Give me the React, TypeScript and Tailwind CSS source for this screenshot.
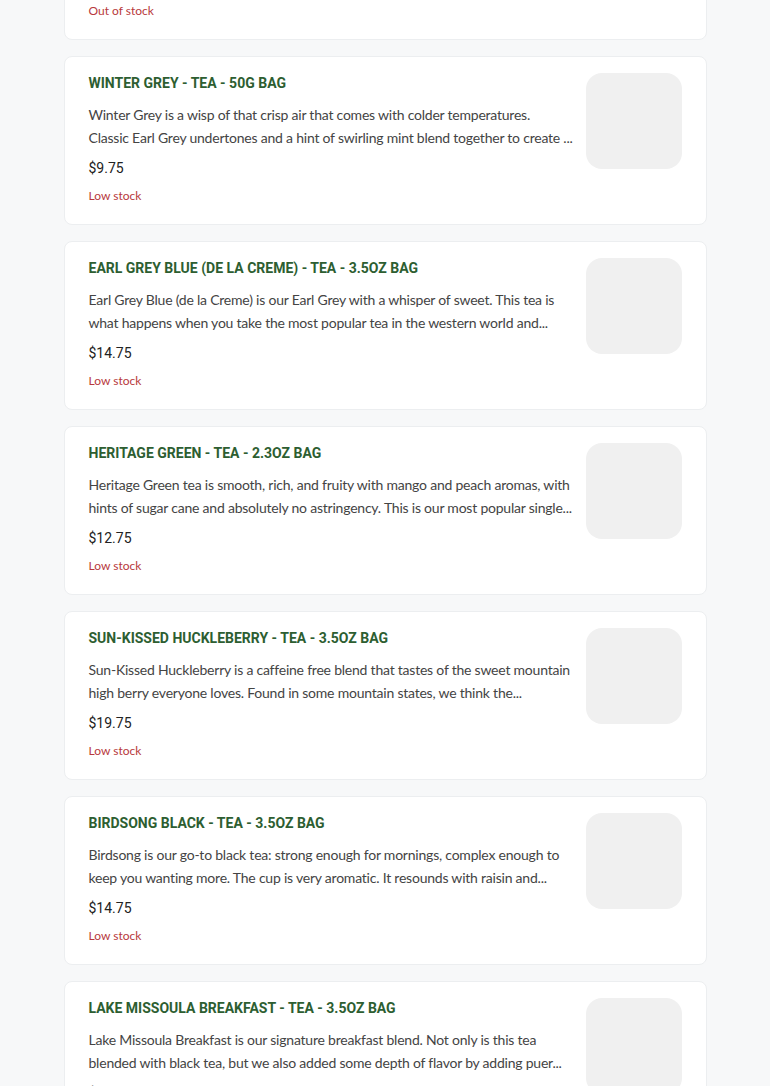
import React from 'react';

type Product = {
  name: string;
  lines: [string, string];
  price: string;
  stock: string;
};

const products: Product[] = [
  {
    name: 'Kashmiri Chai - Tea - 3.5oz Bag',
    lines: [
      'Kashmiri Chai is a warming blend of black tea and spices, rich with cardamom,',
      'cinnamon and clove for a cozy cup any time of day...',
    ],
    price: '$14.75',
    stock: 'Out of stock',
  },
  {
    name: 'Winter Grey - Tea - 50g Bag',
    lines: [
      'Winter Grey is a wisp of that crisp air that comes with colder temperatures.',
      'Classic Earl Grey undertones and a hint of swirling mint blend together to create ...',
    ],
    price: '$9.75',
    stock: 'Low stock',
  },
  {
    name: 'Earl Grey Blue (de la Creme) - Tea - 3.5oz Bag',
    lines: [
      'Earl Grey Blue (de la Creme) is our Earl Grey with a whisper of sweet. This tea is',
      'what happens when you take the most popular tea in the western world and...',
    ],
    price: '$14.75',
    stock: 'Low stock',
  },
  {
    name: 'Heritage Green - Tea - 2.3oz Bag',
    lines: [
      'Heritage Green tea is smooth, rich, and fruity with mango and peach aromas, with',
      'hints of sugar cane and absolutely no astringency. This is our most popular single...',
    ],
    price: '$12.75',
    stock: 'Low stock',
  },
  {
    name: 'Sun-Kissed Huckleberry - Tea - 3.5oz Bag',
    lines: [
      'Sun-Kissed Huckleberry is a caffeine free blend that tastes of the sweet mountain',
      'high berry everyone loves. Found in some mountain states, we think the...',
    ],
    price: '$19.75',
    stock: 'Low stock',
  },
  {
    name: 'Birdsong Black - Tea - 3.5oz Bag',
    lines: [
      'Birdsong is our go-to black tea: strong enough for mornings, complex enough to',
      'keep you wanting more. The cup is very aromatic. It resounds with raisin and...',
    ],
    price: '$14.75',
    stock: 'Low stock',
  },
  {
    name: 'Lake Missoula Breakfast - Tea - 3.5oz Bag',
    lines: [
      'Lake Missoula Breakfast is our signature breakfast blend. Not only is this tea',
      'blended with black tea, but we also added some depth of flavor by adding puer...',
    ],
    price: '$14.75',
    stock: 'Low stock',
  },
];

function ProductCard({ product }: { product: Product }) {
  return (
    <div className="flex gap-4 rounded-lg border border-[#eceef0] bg-white pt-4 pb-[18px] pl-6 pr-6">
      <div className="min-w-0 flex-1">
        <h3 className="text-[14px] leading-5 font-bold uppercase text-[#2d5e31] font-['Roboto',sans-serif]">
          {product.name}
        </h3>
        <div className="mt-[10px] text-[14px] leading-[23px] tracking-[-0.22px] text-[#444] font-['Lato',sans-serif]">
          <p className="whitespace-nowrap">{product.lines[0]}</p>
          <p className="whitespace-nowrap">{product.lines[1]}</p>
        </div>
        <p className="mt-[9px] text-[14px] leading-5 text-[#222] font-['Roboto',sans-serif]">{product.price}</p>
        <p className="mt-2 text-[12px] leading-5 text-[#b8393c] font-['Lato',sans-serif]">{product.stock}</p>
      </div>
      <div className="h-24 w-24 shrink-0 rounded-2xl bg-[#f0f0f0]" />
    </div>
  );
}

export default function App() {
  return (
    <div className="min-h-screen bg-[#f7f8f9] overflow-hidden">
      <div className="mx-auto -mt-[129px] flex w-[643px] flex-col gap-4 pb-10">
        {products.map((p, i) => (
          <ProductCard key={i} product={p} />
        ))}
      </div>
    </div>
  );
}
